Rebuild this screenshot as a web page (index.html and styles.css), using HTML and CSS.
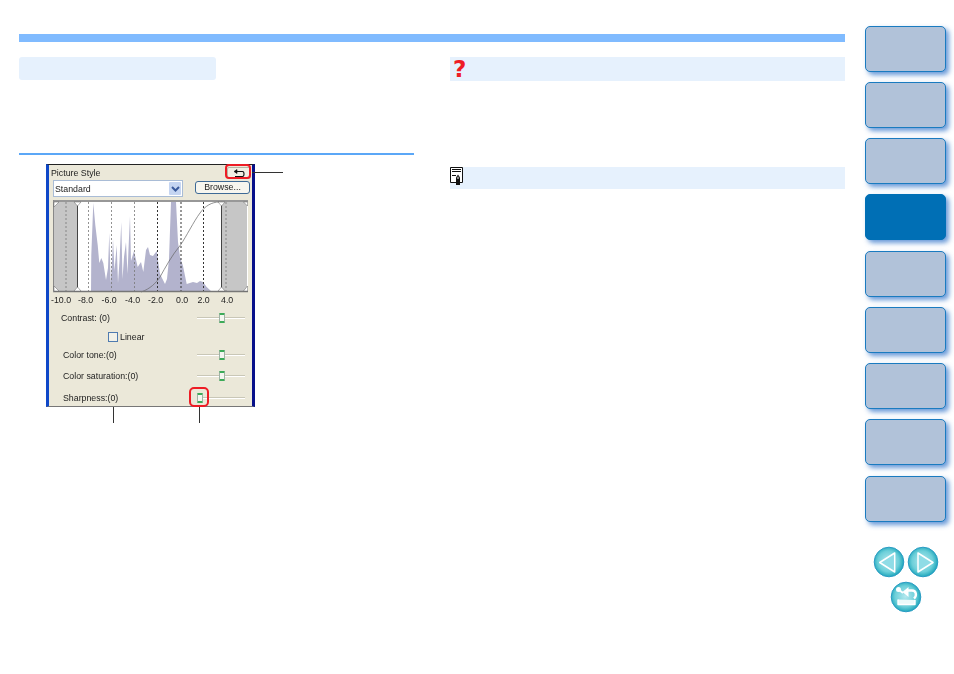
FILE: index.html
```html
<!DOCTYPE html>
<html lang="en">
<head>
<meta charset="utf-8">
<title>Picture Style</title>
<link rel="stylesheet" href="styles.css">
</head>
<body>
<div class="page">
  <main class="content">
    <div class="top-bar"></div>
    <div class="columns">
      <section class="col">
        <div class="pill"></div>
        <div class="rule"></div>
        <figure class="figure">
          <div class="panel">
            <div class="title-row">
              <span>Picture Style</span>
              <button class="back-btn" type="button" aria-label="Undo">
                <svg width="13" height="9" viewBox="0 0 13 9"><path d="M4 .5 1 2.500 4 4.500Z" fill="#111" stroke="#111" stroke-width=".6"/><path d="M3 2.500H9.500C11.500 2.500 11.500 7.500 9.500 7.500H2" fill="none" stroke="#111" stroke-width="1.100"/></svg>
              </button>
            </div>
            <div class="select-row">
              <div class="select"><span>Standard</span><i class="select-arrow"><svg width="9" height="6" viewBox="0 0 9 6"><path d="M1 1l3.500 3.500L8 1" fill="none" stroke="#3a5a9c" stroke-width="2"/></svg></i></div>
              <div class="browse">Browse...</div>
            </div>
            <svg class="graph" width="203" height="106" viewBox="49 201 203 106">
              <rect x="53" y="201" width="195" height="92" fill="#fff"/>
              <path fill="#b3b3cd" d="M91 293 91.300 256 93.300 204 95.300 226 97.700 246 99.300 264 101.300 259 103.300 264 106 281 108 269 109.300 234 110.700 284 112 263 113 240 114.500 272 116.700 246 118 284 119.500 262 121.300 223 122.500 280 124 258 126 243 127.500 275 128.500 250 130 217 131 262 134 252 137.700 268 141 263 143.300 273 146 251 148 248 150 256 153 257 156.700 252 160 275 165 285 167 280 169 260 171 203 176 203 178 243 180 258 183 267 186.700 285 193 283 197 284 200 282 203 283 206.700 288 212 293Z"/>
              <path fill="#c6c6c6" d="M53.500 203H77.500V292H53.500Z"/>
              <path fill="#c6c6c6" d="M221.500 203H247V288L244 292H221.500Z"/>
              <g class="dash">
                <path d="M66 203V292M88.500 203V292M111.500 203V292M134.500 203V292M226 203V292"/>
                <path class="dash-dark" d="M157.500 203V292M181 203V292M203.500 203V292"/>
              </g>
              <path d="M141 293C150 290 156 284 160 278 165 269 172 256 180.500 246 186 238 194 222 200 214 205 207 212 203 219 203" fill="none" stroke="#666" stroke-width=".7"/>
              <path d="M77.500 203V292M221.500 203V292" stroke="#444" stroke-width="1"/>
              <path d="M53 202H248M53 292.500H248" stroke="#777" stroke-width="1.500"/>
              <path d="M53.500 201V293" stroke="#888" stroke-width="1"/>
              <path d="M54 203H59L54 208ZM54 292V287L59 292ZM74 203H81L77.500 207ZM74 292H81L77.500 288ZM218 203H225L221.500 207ZM218 292H225L221.500 288ZM247.500 203V207L243.500 203ZM247.500 292V287L243.500 292Z" fill="#fff" stroke="#666" stroke-width=".5"/>
              <g class="axis">
                <text x="51" y="304">-10.0</text>
                <text x="78" y="304">-8.0</text>
                <text x="101.500" y="304">-6.0</text>
                <text x="125" y="304">-4.0</text>
                <text x="148" y="304">-2.0</text>
                <text x="176" y="304">0.0</text>
                <text x="197.500" y="304">2.0</text>
                <text x="221" y="304">4.0</text>
              </g>
            </svg>
            <div class="row row-contrast">
              <span class="label label-contrast">Contrast: (0)</span>
              <div class="slider"><i class="thumb"></i></div>
            </div>
            <div class="row row-linear">
              <i class="check"></i><span>Linear</span>
            </div>
            <div class="row row-tone">
              <span class="label">Color tone:(0)</span>
              <div class="slider"><i class="thumb"></i></div>
            </div>
            <div class="row row-sat">
              <span class="label">Color saturation:(0)</span>
              <div class="slider"><i class="thumb"></i></div>
            </div>
            <div class="row row-sharp">
              <span class="label">Sharpness:(0)</span>
              <div class="slider"><i class="thumb thumb-start"></i></div>
            </div>
          </div>
          <i class="mark mark-back"></i>
          <i class="mark mark-thumb"></i>
          <i class="lead lead-back"></i>
          <i class="lead lead-label"></i>
          <i class="lead lead-thumb"></i>
        </figure>
      </section>
      <section class="col">
        <div class="band band-q"><span class="q">?</span></div>
        <div class="band band-note">
          <svg class="note-icon" width="14" height="19" viewBox="0 0 14 19">
            <path d="M.5.5H12.500V15.500H.5Z" fill="#fff" stroke="#111"/>
            <path d="M2 2.500H11M2 4.500H11M2 8.500H6" stroke="#111"/>
            <path d="M6 18V10.500L8 7.500 10 10.500V18Z" fill="#111"/>
            <path d="M7.500 10.500 8 9 8.500 10.500V12H7.500Z" fill="#fff"/>
          </svg>
        </div>
      </section>
    </div>
  </main>
  <nav class="side">
    <a class="tab"></a><a class="tab"></a><a class="tab"></a>
    <a class="tab tab-active"></a>
    <a class="tab"></a><a class="tab"></a><a class="tab"></a><a class="tab"></a><a class="tab"></a>
    <div class="nav-row nav-row-first">
      <svg class="nav-btn" width="32" height="32" viewBox="0 0 32 32"><use href="#disc"/><path d="M6.700 16.500 21.700 7V26Z" fill="#8fdce6" stroke="#fff" stroke-width="1.500" stroke-linejoin="round"/></svg>
      <svg class="nav-btn" width="32" height="32" viewBox="0 0 32 32"><use href="#disc"/><path d="M26 16.500 11 7V26Z" fill="#8fdce6" stroke="#fff" stroke-width="1.500" stroke-linejoin="round"/></svg>
    </div>
    <div class="nav-row">
      <svg class="nav-btn" width="32" height="32" viewBox="0 0 32 32"><use href="#disc"/><path d="M8 18.500V23.500H25V19" fill="#eafafa" stroke="#fff" stroke-width="1.400" stroke-linejoin="round"/><path d="M18 9.500H22C26.500 9.500 27 15 24 17.500" fill="none" stroke="#fff" stroke-width="2.400"/><path d="M12.500 11 18.500 6V16Z" fill="#fff"/><circle cx="8.500" cy="8.500" r="2.500" fill="#fff"/><path d="M8.500 8.500 13 12" stroke="#fff" stroke-width="2"/></svg>
    </div>
    <svg class="defs" width="0" height="0">
      <defs>
        <radialGradient id="discFill" cx=".48" cy=".48" r=".52">
          <stop offset="0" stop-color="#b4e8ee"/>
          <stop offset=".68" stop-color="#6ccfd9"/>
          <stop offset="1" stop-color="#1fa7bb"/>
        </radialGradient>
        <circle id="disc" cx="16" cy="16" r="14.800" fill="url(#discFill)" stroke="#2a9cc4" stroke-width="1"/>
      </defs>
    </svg>
  </nav>
</div>
</body>
</html>
```
FILE: styles.css
```css
* { box-sizing: border-box; }
html, body { margin: 0; padding: 0; background: #fff; }
body { font-family: "Liberation Sans", Arial, sans-serif; color: #222; }

.page { display: flex; width: 954px; height: 674px; overflow: hidden; }

.content { width: 845px; padding-left: 19px; padding-top: 34px; flex: none; }
.top-bar { height: 8px; background: #80bbff; }
.columns { display: flex; gap: 36px; margin-top: 15px; }
.col { width: 395px; flex: none; }

.pill { width: 197px; height: 23px; background: #e6f1fd; border-radius: 3px; }
.rule { height: 2px; margin-top: 73px; background: #5ba7f7; }

.figure { position: relative; width: 209px; height: 243px; margin: 9px 0 0 27px; }
.panel {
  width: 209px; height: 243px;
  background: #ebe8d9;
  border-top: 1px solid #222;
  border-left: 3px solid #0f48c8;
  border-right: 3px solid #07108a;
  border-bottom: 1px solid #777;
  font-size: 8.800px;
  line-height: 12px;
  filter: blur(.3px);
}

.title-row { display: flex; justify-content: space-between; align-items: center; height: 15px; padding: 1px 1px 0 2px; }
.back-btn {
  display: flex; align-items: center; justify-content: center;
  width: 24px; height: 12px; padding: 0;
  background: #f1efe4; border: 1px solid #b7b5a5; border-radius: 2px;
}
.select-row { display: flex; justify-content: space-between; align-items: flex-start; height: 20px; padding: 0 2px 0 4px; }
.select {
  display: flex; justify-content: space-between; align-items: center;
  width: 130px; height: 17px; padding: 0 1px 0 1px;
  background: #fff; border: 1px solid #a9bcd6;
}
.select-arrow {
  display: flex; align-items: center; justify-content: center;
  width: 12px; height: 13px; background: #c5d5f2; border-radius: 1px;
}
.browse {
  width: 55px; height: 13px; margin-top: 1px;
  text-align: center; line-height: 11px;
  background: #f7f6ef; border: 1px solid #3e6a96; border-radius: 3px;
}

.graph { display: block; }
.dash path { fill: none; stroke: #777; stroke-width: .8; stroke-dasharray: 2 2; }
.dash .dash-dark { stroke: #333; stroke-width: 1; }
.axis text { font: 8.800px "Liberation Sans", Arial, sans-serif; fill: #222; }

.row { display: flex; align-items: center; height: 14px; padding-left: 14px; }
.row-contrast { margin-top: 5px; padding-left: 12px; }
.row-linear { margin-top: 5px; padding-left: 59px; gap: 2px; }
.row-tone { margin-top: 4px; }
.row-sat { margin-top: 7px; }
.row-sharp { margin-top: 8px; }
.label { width: 134px; flex: none; }
.label-contrast { width: 136px; }
.check { width: 10px; height: 10px; background: #f2f1e8; border: 1px solid #4f7bb0; }
.slider { position: relative; width: 48px; height: 2px; background: #c9c7b7; border-bottom: 1px solid #fff; }
.thumb {
  position: absolute; left: 22px; top: -4px;
  width: 6px; height: 10px;
  background: #f4f6f0;
  border: 1px solid #9fb3a6;
  border-top: 2px solid #3cab58;
  border-bottom: 2px solid #3cab58;
  border-radius: 1px;
}
.thumb-start { left: 0; }

.mark { position: absolute; border: 2px solid #ee1c25; }
.mark-back { left: 179px; top: 0; width: 26px; height: 15px; border-radius: 4px; }
.mark-thumb { left: 143px; top: 223px; width: 20px; height: 20px; border-radius: 5px; }
.lead { position: absolute; background: #333; }
.lead-back { left: 206px; top: 8px; width: 31px; height: 1px; }
.lead-label { left: 67px; top: 243px; width: 1px; height: 16px; }
.lead-thumb { left: 153px; top: 243px; width: 1px; height: 16px; }

.band { background: #e6f1fd; position: relative; }
.band-q { height: 24px; }
.band-note { height: 22px; margin-top: 86px; }
.q {
  position: absolute; left: 3px; top: -1px;
  font: bold 23px/27px "DejaVu Sans", "Liberation Sans", sans-serif;
  color: #ee1c25;
}
.note-icon { position: absolute; left: 0; top: 0; display: block; }

.side { width: 109px; flex: none; display: flex; flex-direction: column; padding: 25.500px 0 0 20px; gap: 10.250px; }
.tab {
  display: block; width: 81px; height: 46px; flex: none;
  background: #b1c2d9;
  border: 1px solid #1a7bc0;
  border-radius: 5px;
  box-shadow: 3px 3px 5px rgba(40, 110, 200, .7);
}
.tab-active { background: #006fb5; border-color: #006fb5; }
.nav-row { display: flex; justify-content: center; gap: 2px; width: 81px; margin-top: -7.250px; flex: none; }
.nav-row-first { margin-top: 14.250px; }
.nav-btn { display: block; }
.defs { position: absolute; }
```
